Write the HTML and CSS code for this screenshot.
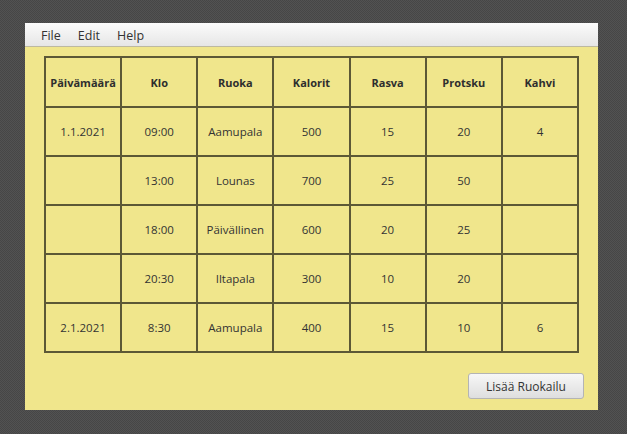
FILE: index.html
```html
<!DOCTYPE html>
<html>
<head>
<meta charset="utf-8">
<link rel="stylesheet" href="styles.css">
</head>
<body>
<div class="window">
  <div class="menubar">
    <span class="menu">File</span>
    <span class="menu">Edit</span>
    <span class="menu">Help</span>
  </div>
  <div class="content">
    <table class="grid">
      <tr class="head">
        <th>Päivämäärä</th><th>Klo</th><th>Ruoka</th><th>Kalorit</th><th>Rasva</th><th>Protsku</th><th>Kahvi</th>
      </tr>
      <tr><td>1.1.2021</td><td>09:00</td><td>Aamupala</td><td>500</td><td>15</td><td>20</td><td>4</td></tr>
      <tr><td></td><td>13:00</td><td>Lounas</td><td>700</td><td>25</td><td>50</td><td></td></tr>
      <tr><td></td><td>18:00</td><td>Päivällinen</td><td>600</td><td>20</td><td>25</td><td></td></tr>
      <tr><td></td><td>20:30</td><td>Iltapala</td><td>300</td><td>10</td><td>20</td><td></td></tr>
      <tr><td>2.1.2021</td><td>8:30</td><td>Aamupala</td><td>400</td><td>15</td><td>10</td><td>6</td></tr>
    </table>
    <div class="actions">
      <button class="btn">Lisää Ruokailu</button>
    </div>
  </div>
</div>
</body>
</html>
```

FILE: styles.css
```css
html, body {
  margin: 0;
  padding: 0;
}
body {
  width: 627px;
  height: 434px;
  background-color: #4b4b4b;
  background-image: repeating-conic-gradient(#525252 0 25%, #464646 0 50%);
  background-size: 2px 2px;
  font-family: "Open Sans", "Noto Sans", sans-serif;
  overflow: hidden;
  padding-top: 23px;
  box-sizing: border-box;
}
.window {
  margin-left: 25px;
  width: 573px;
  height: 387px;
  display: flex;
  flex-direction: column;
  background: #f0e68c;
}
.menubar {
  height: 24px;
  box-sizing: border-box;
  background: linear-gradient(#fbfbfb, #e6e6e6);
  border-bottom: 1px solid #bdb9a0;
  display: flex;
  align-items: center;
  padding-left: 8px;
}
.menu {
  font-size: 12.5px;
  color: #333;
  padding: 1px 8px 0;
  line-height: 23px;
}
.menu + .menu { margin-left: 1px; }
.content {
  flex: 1;
  padding: 9px 15px 0 19px;
  display: flex;
  flex-direction: column;
}
.grid {
  border-collapse: collapse;
  table-layout: fixed;
  width: 535px;
  height: 297px;
}
.grid th, .grid td {
  border: 2px solid #5c5836;
  text-align: center;
  vertical-align: middle;
  padding: 0;
  color: #333;
  font-size: 11.5px;
}
.grid th {
  font-weight: bold;
  font-size: 11px;
  color: #2e2e2e;
}
.grid tr.head { height: 50px; }
.grid tr { height: 49px; }
.actions {
  display: flex;
  justify-content: flex-end;
  margin-top: 20px;
}
.btn {
  width: 116px;
  height: 26px;
  border: 1px solid #b4b4b4;
  border-radius: 3px;
  background: linear-gradient(#f7f7f7, #dedede);
  font-family: "Open Sans", "Noto Sans", sans-serif;
  font-size: 12px;
  color: #333;
  padding: 0;
  margin-right: -1px;
}
```
